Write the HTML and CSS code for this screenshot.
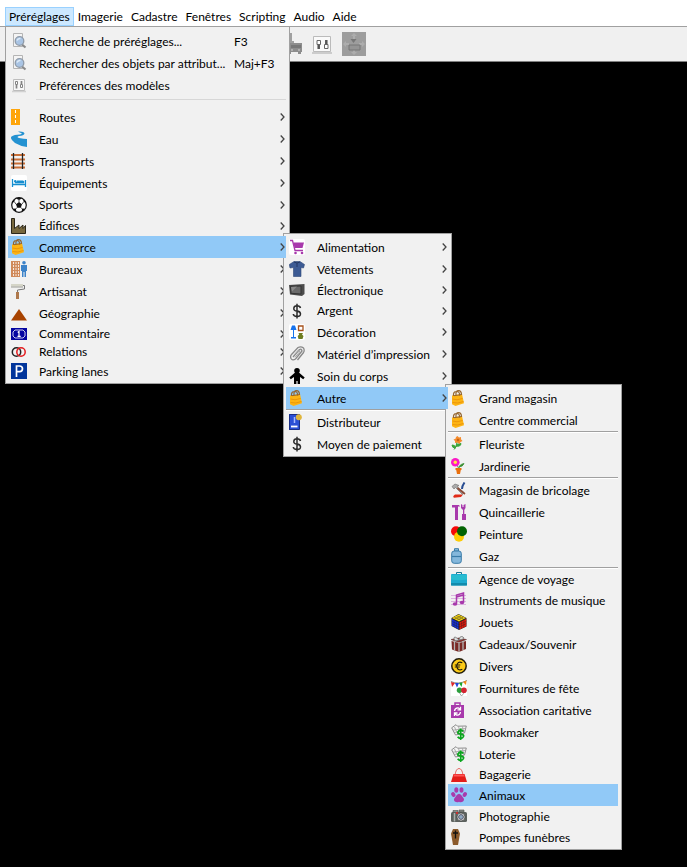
FILE: index.html
```html
<!DOCTYPE html>
<html lang="fr">
<head>
    <meta charset="UTF-8">
    <meta name="viewport" content="width=device-width, initial-scale=1.0">
    <title>Préréglages</title>
    <link rel="stylesheet" href="styles.css">
</head>
<body>
    <!-- shared icons -->
    <svg class="defs" width="0" height="0">
        <symbol id="arrow" viewBox="0 0 5 8">
            <path d="M.7.5 4 4 .7 7.5" fill="none" stroke="#444" stroke-width="1.3"/>
        </symbol>
        <symbol id="search" viewBox="0 0 16 16">
            <path d="M2.500.5h9v13h-9z" fill="#f4f4f4" stroke="#b4b4b4"/>
            <path d="M11 11.500 14.500 14.500" stroke="#8b8b8b" stroke-width="2.200"/>
            <circle cx="8.500" cy="8" r="4.300" fill="#a9c4e4" stroke="#8e9aa8" stroke-width="1.300"/>
            <path d="M6 7.500Q7 5 9.500 5.500" fill="none" stroke="#dfecf8" stroke-width="1.500"/>
        </symbol>
        <symbol id="prefs" viewBox="0 0 16 16">
            <path d="M1 14.500h14" stroke="#999" stroke-width="1.500" opacity=".5"/>
            <path d="M2.500 2.500h11v11h-11z" fill="#fafafa" stroke="#a8a8a8"/>
            <path d="M4.500 4.500h2v3h-2zM9.500 7.500h2v3h-2z" fill="#fff" stroke="#555"/>
            <path d="M5.500 8v3.500M10.500 4v3" stroke="#555" stroke-width="1.700"/>
        </symbol>
        <symbol id="bag" viewBox="0 0 16 16">
            <path d="M1 5.500 11 4l2 9.300L4.500 16 1 14.300z" fill="#fdb414"/>
            <path d="M2.500 6Q2 1.500 5.500 1.500T8.500 5.500M5 5Q4.500.6 7.500.6T10.500 5" fill="none" stroke="#94652f" stroke-width="1.200"/>
            <path d="M3 5.700 10 4.700" stroke="#94652f"/>
            <path d="M1.500 9q4 1.800 10-.5M1.500 12.500q5 1.500 11-1" fill="none" stroke="#e8920a" stroke-width=".9"/>
        </symbol>
        <symbol id="dollar" viewBox="0 0 16 16">
            <path d="M11.500 5Q11 2.800 8 2.800T4.800 5.300 8 8t3.500 2.900T8 13.500 4.300 11M8 .8v14.700" fill="none" stroke="#2b2b2b" stroke-width="1.500"/>
        </symbol>
        <symbol id="ticket" viewBox="0 0 16 16">
            <path d="M.7 3.800 5 .7l1.500 1.500L15.300 2 13.500 9 4.500 11z" fill="#f4f4f4" stroke="#8c8c8c"/>
            <path d="M2 6.200 14 4.500M3 8.500 13.500 6.800M3.500 3 7 10.500M7.500 2.500l2 7M11.500 2.500l1 6" fill="none" stroke="#9a9a9a" stroke-width=".8"/>
            <path d="M12.300 7.500Q11.500 6.200 9.700 6.200T7 8t2.700 2.200T12.500 12.500 9.700 14.300 6.700 12.700M9.700 4.500V16" fill="none" stroke="#0aa51c" stroke-width="1.700"/>
        </symbol>
    </svg>

    <nav class="menubar">
        <button class="open">Préréglages</button>
        <button>Imagerie</button>
        <button>Cadastre</button>
        <button>Fenêtres</button>
        <button>Scripting</button>
        <button>Audio</button>
        <button>Aide</button>

        <ul class="menu main-menu">
            <li><button class="item"><svg class="icon"><use href="#search"/></svg><span>Recherche de préréglages...</span><kbd>F3</kbd></button></li>
            <li><button class="item"><svg class="icon"><use href="#search"/></svg><span>Rechercher des objets par attribut...</span><kbd>Maj+F3</kbd></button></li>
            <li><button class="item"><svg class="icon faded"><use href="#prefs"/></svg><span>Préférences des modèles</span></button></li>
            <li class="divider"></li>
            <li><button class="item"><svg class="icon" viewBox="0 0 16 16"><path d="M0 0h9v16H0z" fill="#fea50b"/><path d="M4.500 1v15" stroke="#fff" stroke-dasharray="3 2"/></svg><span>Routes</span><svg class="arrow"><use href="#arrow"/></svg></button></li>
            <li><button class="item"><svg class="icon" viewBox="0 0 16 16"><path d="M7 .5Q13 0 13.500 2.500 13 4.500 8 5q-3 1 0 2 5 1 8 1v8Q10 15.500 4 12-1.500 8 .5 5.500 3 3.500 9 3.500q3-.8 1-1.500T7 .5z" fill="#2492d1"/></svg><span>Eau</span><svg class="arrow"><use href="#arrow"/></svg></button></li>
            <li><button class="item"><svg class="icon" viewBox="0 0 16 16"><path d="M0 2h14M0 6.500h14M0 10.500h14M0 14.500h14" stroke="#c96f37" stroke-width="1.800"/><path d="M2.500 0v16M11.500 0v16" stroke="#222" stroke-width="1.300"/></svg><span>Transports</span><svg class="arrow"><use href="#arrow"/></svg></button></li>
            <li><button class="item"><svg class="icon" viewBox="0 0 16 16"><rect width="16" height="16" rx="2" fill="#fff"/><path d="M1.500 4v8M14.500 5v7M1 9.500h14M4 7.500h9" fill="none" stroke="#168fd0" stroke-width="1.300"/><circle cx="4.300" cy="6.300" r="1.300" fill="#168fd0"/><path d="M6 5.500h6q1.500.5 1.500 2H6z" fill="#168fd0"/></svg><span>Équipements</span><svg class="arrow"><use href="#arrow"/></svg></button></li>
            <li><button class="item short"><svg class="icon" viewBox="0 0 16 16"><circle cx="8" cy="8" r="7.300" fill="#fff" stroke="#111" stroke-width="1.200"/><path d="M8 5l3 2.200L9.800 10.700H6.200L5 7.200zM5 1.500 8 3l3-1.500L8 .5zM.8 6.500l2.500-1.800L4 2.500 1.500 4zM15.200 6.500l-2.500-1.800L12 2.500 14.500 4zM2 11.800l2.800-.2.700 3.200-2-1zM14 11.800l-2.800-.2-.7 3.200 2-1z" fill="#111"/><path d="M8 3v2M5 7.200 3.300 4.700M11 7.200l1.700-2.500M6.200 10.700l-1.400 1M9.800 10.700l1.400 1" stroke="#111" stroke-width=".7"/></svg><span>Sports</span><svg class="arrow"><use href="#arrow"/></svg></button></li>
            <li><button class="item short"><svg class="icon" viewBox="0 0 16 16"><path d="M.5.5h3v10L8 7v3.500L12 7v3.500L14.500 7.500v8H.5z" fill="#78683d" stroke="#2b2719"/></svg><span>Édifices</span><svg class="arrow"><use href="#arrow"/></svg></button></li>
            <li class="active">
                <button class="item"><svg class="icon"><use href="#bag"/></svg><span>Commerce</span><svg class="arrow"><use href="#arrow"/></svg></button>

                <ul class="menu submenu shop-menu">
                    <li><button class="item"><svg class="icon" viewBox="0 0 16 16"><rect width="16" height="16" rx="2" fill="#fff"/><path d="M4.500 3.500H15L13.500 9H5.500z" fill="#a839ac"/><path d="M1 1.500h2.500L6 11.500h8" fill="none" stroke="#a839ac" stroke-width="1.300"/><circle cx="6.500" cy="14" r="1.300" fill="#a839ac"/><circle cx="13" cy="14" r="1.300" fill="#a839ac"/></svg><span>Alimentation</span><svg class="arrow"><use href="#arrow"/></svg></button></li>
                    <li><button class="item"><svg class="icon" viewBox="0 0 16 16"><path d="M5 .5h6l4.500 3L14.500 7 12 6.500v9H4.500v-9L1 7 .3 3.500z" fill="#3d5b94" stroke="#2e4677" stroke-width=".6"/><path d="M5 1q3 2 6 0M8 2v4" fill="none" stroke="#243965"/></svg><span>Vêtements</span><svg class="arrow"><use href="#arrow"/></svg></button></li>
                    <li><button class="item compact"><svg class="icon" viewBox="0 0 16 16"><path d="M0 3 15.500 2v10L13 14 1 12.500z" fill="#4c4c4c"/><path d="M1.500 4.300 12 4v8L2 11.300z" fill="#6a6a6a" stroke="#333"/><path d="M2 5l6-.5-5 5z" fill="#8a8a8a"/></svg><span>Électronique</span><svg class="arrow"><use href="#arrow"/></svg></button></li>
                    <li><button class="item short"><svg class="icon"><use href="#dollar"/></svg><span>Argent</span><svg class="arrow"><use href="#arrow"/></svg></button></li>
                    <li><button class="item"><svg class="icon" viewBox="0 0 16 16"><rect width="16" height="16" rx="2" fill="#fff"/><path d="M3 1.500h3L7.500 6h-6zM4 6h1v7H4zM2 13h5v1.500H2z" fill="#1673ee"/><path d="M9.500 2h4.500v4.500H9.500z" fill="#fff" stroke="#a6521c" stroke-width="1.300"/><path d="M9.500 9h4.500l-1 1.500 1.500 1.500-1 3h-4L8.700 12l1.500-1.500z" fill="#6e7d20"/></svg><span>Décoration</span><svg class="arrow"><use href="#arrow"/></svg></button></li>
                    <li><button class="item"><svg class="icon" viewBox="0 0 16 16"><path d="M4 11 10.500 3.500q2-1 2.500 1.500L6.500 13q-3 2-4.500-.5-1-2.500.5-4L9 1.500q3-1.500 5.500.5 1.300 2.500 0 4.500L8.500 14" fill="none" stroke="#888" stroke-width="1.300"/><path d="M4.500 9.500 9.500 4q2 0 1 2L6 11.300" fill="none" stroke="#aaa"/></svg><span>Matériel d’impression</span><svg class="arrow"><use href="#arrow"/></svg></button></li>
                    <li><button class="item"><svg class="icon" viewBox="0 0 16 16"><circle cx="8" cy="2.800" r="2.800" fill="#000"/><path d="M5.500 5h5l5.200 4.500-1.500 1.800L11 9v7H8.600v-3H7.400v3H5V9l-3.200 2.300L.3 9.500z" fill="#000"/></svg><span>Soin du corps</span><svg class="arrow"><use href="#arrow"/></svg></button></li>
                    <li class="active">
                        <button class="item"><svg class="icon"><use href="#bag"/></svg><span>Autre</span><svg class="arrow"><use href="#arrow"/></svg></button>

                        <ul class="menu submenu other-menu">
                            <li><button class="item"><svg class="icon"><use href="#bag"/></svg><span>Grand magasin</span></button></li>
                            <li><button class="item"><svg class="icon"><use href="#bag"/></svg><span>Centre commercial</span></button></li>
                            <li class="line"></li>
                            <li><button class="item"><svg class="icon" viewBox="0 0 16 16"><path d="M6 6Q7 10 3 13.500M4.500 12Q1 12 1 9q3-.5 3.500 3zM5.500 10Q6 7.500 10 7.500 9.500 11 5.500 10z" fill="#3ba53b" stroke="#3ba53b"/><path d="M6.500 0l1.500 1.500L10 1v2.200L11.500 5 9.500 6 8.500 8 6.500 6.500 4 7V5L2.500 3.500l2-.8L5 1z" fill="#f58b2c"/><circle cx="7" cy="4" r="1.300" fill="#c66414"/></svg><span>Fleuriste</span></button></li>
                            <li><button class="item"><svg class="icon" viewBox="0 0 16 16"><path d="M6 7l1.500 3M8 10Q8 6.500 13 5.500 12 8.500 8 9" fill="#398e31" stroke="#398e31" stroke-width=".8"/><circle cx="4.300" cy="4.300" r="4.300" fill="#fb19c5"/><circle cx="4.300" cy="4.300" r="1.700" fill="#ffe53d"/><path d="M4.500 10h6v2h-.7l-.8 4H6l-.8-4h-.7z" fill="#e96f0c"/></svg><span>Jardinerie</span></button></li>
                            <li class="line"></li>
                            <li><button class="item"><svg class="icon" viewBox="0 0 16 16"><path d="M4 12.500h8l-2 2.500-7 .7q-2-1 1-3.200z" fill="#e12a17"/><path d="M1 4.500 4 2l4 1.500-2 1 7 6-1.500 2-7-7L3 7z" fill="#aaa" stroke="#777" stroke-width=".7"/><path d="M13.500.5Q11 4 11 7" fill="none" stroke="#284c91" stroke-width="2"/><path d="M6.500 6 14 12" stroke="#8b4b37" stroke-width="1.700"/></svg><span>Magasin de bricolage</span></button></li>
                            <li><button class="item"><svg class="icon" viewBox="0 0 16 16"><path d="M1 1h7l1 1.500H7V16H4V3.500H1zM10 0l1.500 1v2h1V1L14.500 0v4L13.300 6v4H15v6h-4v-6h1V6L10 4z" fill="#a839ac"/></svg><span>Quincaillerie</span></button></li>
                            <li><button class="item"><svg class="icon" viewBox="0 0 16 16"><circle cx="5" cy="5.200" r="5" fill="#f50909"/><circle cx="8" cy="10.800" r="5" fill="#fdcc05"/><circle cx="11" cy="5.200" r="5" fill="#026302"/></svg><span>Peinture</span></button></li>
                            <li><button class="item"><svg class="icon" viewBox="0 0 16 16"><path d="M3.500.7h4v2.500h-4z" fill="#8fc0de" stroke="#397ba8"/><rect x=".7" y="3" width="9.600" height="12.300" rx="2.500" fill="#84b7db" stroke="#397ba8"/><path d="M1 8.500h9" stroke="#397ba8" stroke-width="1.200"/></svg><span>Gaz</span></button></li>
                            <li class="line"></li>
                            <li><button class="item compact"><svg class="icon" viewBox="0 0 16 16"><path d="M5.500 3.500v-2h5v2" fill="none" stroke="#18778f"/><rect y="3" width="16" height="11.500" rx="1" fill="#1eabd0"/><path d="M0 4h16v4.500Q8 10 0 8.500z" fill="#28bcd0"/><path d="M0 12h16v2.500H0z" fill="#128bac"/></svg><span>Agence de voyage</span></button></li>
                            <li><button class="item"><svg class="icon" viewBox="0 0 16 16"><path d="M0 3.500h15M0 6.500h15M0 9.500h15M0 12.500h15" stroke="#d4a4db" stroke-width=".8"/><path d="M5.500 11.500V3l7-2v9M5.500 5l7-2" fill="none" stroke="#a839ac" stroke-width="1.500"/><ellipse cx="4" cy="12" rx="2.300" ry="1.700" fill="#a839ac"/><ellipse cx="11" cy="10.500" rx="2.300" ry="1.700" fill="#a839ac"/></svg><span>Instruments de musique</span></button></li>
                            <li><button class="item"><svg class="icon" viewBox="0 0 16 16"><path d="M7.500 0 15.500 4v8.500L8 16 .5 12V4z" fill="#222"/><path d="M7.500.5 14.800 4 8 7.400 1 4z" fill="#f7d719"/><path d="M.9 5l6.600 3.200v7L.9 11.700z" fill="#1832e0"/><path d="M8.500 8.200 15.200 5v7.200l-6.700 3.200z" fill="#e8180c"/><path d="M5.500 1.700l7 3.300M3.200 3l7 3.300M10.200 1.900l-7 3.300M12.500 3 5.500 6.400M3.100 6v7M5.300 7v7.300M.9 7.400l7.100 3.400 7.200-3.400M.9 9.700 8 13.100l7.200-3.400M10.700 7v7.300M12.900 6v7" fill="none" stroke="#222" stroke-width=".4"/></svg><span>Jouets</span></button></li>
                            <li><button class="item"><svg class="icon" viewBox="0 0 16 16"><path d="M.5 5 8 7l7-2v8l-7 3-7-2.500z" fill="#7a2925"/><path d="M0 3.500 7.500 2l8 1.500L8 6.500z" fill="#8c302b" stroke="#553030" stroke-width=".5"/><path d="M3.500 5v9.500M12 5v9M8 6v10" stroke="#b5b5b5" stroke-width="1.300"/><path d="M8 4Q3-1 3 2.500T8 4q1-5 4-3T8 4" fill="#ddd" stroke="#777" stroke-width=".9"/></svg><span>Cadeaux/Souvenir</span></button></li>
                            <li><button class="item"><svg class="icon" viewBox="0 0 16 16"><circle cx="8" cy="8" r="7.200" fill="#fccb17" stroke="#211c0b" stroke-width="1.500"/><path d="M11.300 4.700Q6.500 2.500 5.700 8 6.500 13.500 11.300 11.300M3.800 7h5.500M3.800 9h5" fill="none" stroke="#211c0b" stroke-width="1.200"/></svg><span>Divers</span></button></li>
                            <li><button class="item"><svg class="icon" viewBox="0 0 16 16"><rect width="16" height="16" fill="#fff"/><path d="M0 1.500Q7 5 16 .5" fill="none" stroke="#555" stroke-width=".7"/><path d="M0 2l4 1L1 7z" fill="#df2727"/><path d="M4 3h4L6 7.500z" fill="#2249dd"/><path d="M8 3l3.500-.5L10.500 7z" fill="#17a92c"/><path d="M12 2l3.500-1.500L15 5z" fill="#f18b16"/><circle cx="8.500" cy="10.300" r="2.700" fill="#2b9e3c"/><circle cx="13" cy="10.300" r="2.800" fill="#d42331"/><path d="M8.500 13l2 3 2.500-3" fill="none" stroke="#888" stroke-width=".7"/></svg><span>Fournitures de fête</span></button></li>
                            <li><button class="item"><svg class="icon" viewBox="0 0 16 16"><path d="M4 4V1h5v3" fill="none" stroke="#a839ac" stroke-width="1.500"/><path d="M0 3h13v13H0z" fill="#a839ac"/><path d="M3.500 9Q4 5.500 7.500 6l1.500 1M9.500 10Q9 13.500 5.500 13L4 12M9.500 4.800v3h-3M3.500 14v-3h3" fill="none" stroke="#fff" stroke-width="1.300"/></svg><span>Association caritative</span></button></li>
                            <li><button class="item"><svg class="icon"><use href="#ticket"/></svg><span>Bookmaker</span></button></li>
                            <li><button class="item"><svg class="icon"><use href="#ticket"/></svg><span>Loterie</span></button></li>
                            <li><button class="item small"><svg class="icon" viewBox="0 0 16 16"><path d="M4 8Q5 1.500 8 1.500T12 8" fill="none" stroke="#e46a66"/><path d="M2.500 7h11L16 15H0z" fill="#e31d19"/><path d="M3 7.500h10l.7 2H2.500z" fill="#f55"/></svg><span>Bagagerie</span></button></li>
                            <li><button class="item selected"><svg class="icon" viewBox="0 0 16 16"><g fill="#a839ac"><ellipse cx="2.300" cy="7.500" rx="2" ry="2.600" transform="rotate(-25 2.300 7.500)"/><ellipse cx="5.300" cy="3" rx="2" ry="2.800"/><ellipse cx="10.500" cy="3" rx="2" ry="2.800"/><ellipse cx="13.800" cy="7.500" rx="2" ry="2.600" transform="rotate(25 13.800 7.500)"/><path d="M8 6.700Q10 7 12 10.500q2 2 0 4-2 1.500-4 .3-2 1.200-4.200-.3-1.800-2 .2-4Q6 7 8 6.700z"/></g></svg><span>Animaux</span></button></li>
                            <li><button class="item compact"><svg class="icon" viewBox="0 0 16 16"><rect y="4" width="16" height="10" rx="1.500" fill="#5c615e"/><path d="M2 2.500h5v2H2zM8 2h5v2H8z" fill="#888c89" stroke="#4b4f4c" stroke-width=".6"/><path d="M3.500 5v8.500" stroke="#aab0ac" stroke-width="1.500"/><circle cx="10" cy="9" r="4" fill="#eee" stroke="#3d403e" stroke-width=".7"/><circle cx="10" cy="9" r="2.400" fill="#8fa9c3" stroke="#556"/><circle cx="6" cy="5" r="1" fill="#e22"/></svg><span>Photographie</span></button></li>
                            <li><button class="item"><svg class="icon" viewBox="0 0 16 16"><path d="M2 0h5l2 4.500L7 16H2L0 4.500z" fill="#8b5a2b"/><path d="M4.500 1.500v8M2 4h5" stroke="#111" stroke-width="1.300"/></svg><span>Pompes funèbres</span></button></li>
                        </ul>
                    </li>
                    <li class="line"></li>
                    <li><button class="item"><svg class="icon" viewBox="0 0 16 16"><path d="M0 0h10.500v16H0z" fill="#2b4fd5"/><path d="M.5.5h10v15H.5z" fill="none" stroke="#1a2f87"/><path d="M2 12.500h6.500" stroke="#fff" stroke-width="1.800"/><path d="M5.500 3v6" stroke="#a9bbff" stroke-width="1.500"/><circle cx="9.800" cy="3.300" r="3" fill="#dfb53b"/></svg><span>Distributeur</span></button></li>
                    <li><button class="item"><svg class="icon"><use href="#dollar"/></svg><span>Moyen de paiement</span></button></li>
                </ul>
            </li>
            <li><button class="item"><svg class="icon" viewBox="0 0 16 16"><path d="M0 0h9v16H0z" fill="#d08a5b"/><path d="M2.500 1v14M5 1v14M7.500 1v14" stroke="#fff" stroke-width=".8" stroke-dasharray="2 1"/><circle cx="13" cy="1.800" r="1.800" fill="#3d83c9"/><path d="M10 4h6v6h-1v6h-1.500v-5h-1v5H11v-6h-1z" fill="#3d83c9"/></svg><span>Bureaux</span><svg class="arrow"><use href="#arrow"/></svg></button></li>
            <li><button class="item"><svg class="icon" viewBox="0 0 16 16"><path d="M0 1h12v3.500H0z" fill="#d5d5c8"/><path d="M0 4h12" stroke="#aaa"/><path d="M12 2.500h1.500V6L6.500 7v3" fill="none" stroke="#777"/><path d="M5 9h3v7H5z" fill="#ae784c"/></svg><span>Artisanat</span><svg class="arrow"><use href="#arrow"/></svg></button></li>
            <li><button class="item"><svg class="icon" viewBox="0 0 16 16"><path d="M8 4l8 11.500H0z" fill="#a84300"/></svg><span>Géographie</span><svg class="arrow"><use href="#arrow"/></svg></button></li>
            <li><button class="item small"><svg class="icon" viewBox="0 0 16 16"><path d="M0 2h16v12H0z" fill="#0404a0"/><path d="M4 4h8l2 2v4l-2 2H4l-2-2V6z" fill="none" stroke="#fff" stroke-width=".8"/><path d="M6.700 6.500 8 5.500V10M6.500 10.300h3.200" fill="none" stroke="#fff" stroke-width="1.200"/></svg><span>Commentaire</span><svg class="arrow"><use href="#arrow"/></svg></button></li>
            <li><button class="item tight"><svg class="icon" viewBox="0 0 16 16"><circle cx="5.500" cy="8" r="4.200" fill="none" stroke="#222" stroke-width="1.500"/><circle cx="10" cy="8" r="4.200" fill="none" stroke="#e31a1c" stroke-width="1.500"/></svg><span>Relations</span><svg class="arrow"><use href="#arrow"/></svg></button></li>
            <li><button class="item"><svg class="icon" viewBox="0 0 16 16"><path d="M0 0h16v16H0z" fill="#01359b"/><path d="M5.500 14V3H8.500Q11.500 3 11.500 5.800T8.500 8.700H6" fill="none" stroke="#fff" stroke-width="1.700"/></svg><span>Parking lanes</span><svg class="arrow"><use href="#arrow"/></svg></button></li>
        </ul>
    </nav>

    <div class="toolbar">
        <button aria-label="Transport"><svg width="24" height="24" viewBox="0 0 24 24"><path d="M8 1h6v8h2v3H8z" fill="#a0a0a0"/><path d="M10 11h14v9h-1v2h-3v-2h-7v2h-3z" fill="#8d8d8d"/><path d="M13 13h10v3H13z" fill="#777"/><path d="M13 18h2M20 18h2" stroke="#bbb" stroke-width="1.500"/></svg></button>
        <button aria-label="Préférences"><svg width="24" height="24" viewBox="0 0 24 24"><path d="M2 21h20" stroke="#aaa" stroke-width="2" opacity=".5"/><path d="M3.500 4.500h17v15h-17z" fill="#fafafa" stroke="#bbb"/><path d="M7 8.500h3.500v4H7zM14.500 12.500H18v4h-3.500z" fill="#fff" stroke="#666"/><path d="M8.700 13v4M16.300 8v4" stroke="#555" stroke-width="2.500"/></svg></button>
        <button aria-label="Déplacer"><svg width="24" height="24" viewBox="0 0 24 24"><path d="M0 0h24v24H0z" fill="#9d9d9d"/><path d="M12 1l3 3h-2v4h-2V4H9zM12 23l3-3h-2v-3h-2v3H9zM1 12l3-3v2h3v2H4v2zM23 12l-3-3v2h-3v2h3v2z" fill="#adadad"/><path d="M7 13h11v5H7z" fill="#949494" stroke="#777"/><path d="M8.500 7h6l-3 4z" fill="#777"/></svg></button>
    </div>

    <main class="map"></main>
</body>
</html>
```
FILE: styles.css
```css
body {
    margin: 0;
    min-height: 100vh;
    display: flex;
    flex-direction: column;
    background-color: #000;
    color: #000;
    font-family: Lato, "Open Sans", sans-serif;
    font-size: 12px;
}

button {
    margin: 0;
    padding: 0;
    border: none;
    background: none;
    color: inherit;
    font: inherit;
    text-align: left;
    white-space: nowrap;
}

.defs {
    position: absolute;
}

/* menu bar */
.menubar {
    position: relative;
    z-index: 10;
    display: flex;
    padding: 7px 5px 0;
    background-color: #fff;
    border-bottom: 1px solid #a0a0a0;
}

.menubar > button {
    height: 19px;
    padding: 0 3px;
    border: 1px solid transparent;
    line-height: 17px;
}

.menubar > .open {
    background-color: #cce8ff;
    border-color: #99d1ff;
}

/* toolbar */
.toolbar {
    display: flex;
    gap: 8px;
    height: 34px;
    padding-left: 278px;
    align-items: center;
    background-color: #f0f0f0;
    border-bottom: 1px solid #808080;
}

.toolbar svg {
    display: block;
}

.map {
    flex: 1;
}

/* drop-down menus */
.menu {
    position: absolute;
    box-sizing: border-box;
    margin: 0;
    padding: 2px 3px 1px 2px;
    list-style: none;
    background-color: #f1f1f1;
    border: 1px solid #a0a0a0;
}

.main-menu {
    top: 26px;
    left: 5px;
    min-width: 285px;
    padding-top: 3px;
}

.submenu {
    top: -3px;
    left: calc(100% - 3px);
    z-index: 1;
}

.shop-menu {
    min-width: 169px;
}

.other-menu {
    min-width: 177px;
}

.item {
    display: flex;
    align-items: center;
    width: 100%;
    height: 22px;
    padding: 0 1px 0 3px;
}

.item.short {
    height: 21px;
}

.item.compact {
    height: 20px;
}

.item.small {
    height: 19px;
}

.item.tight {
    height: 17px;
}

.item.selected {
    background-color: #91c9f7;
}

.active {
    position: relative;
    z-index: 1;
}

/* the open entry stays above its own submenu */
.active > .item {
    position: relative;
    z-index: 2;
    background-color: #91c9f7;
}

.item span {
    flex: 1;
}

.item kbd {
    width: 51px;
    font: inherit;
}

.icon {
    flex: none;
    width: 16px;
    height: 16px;
    margin-right: 12px;
}

.faded {
    opacity: 0.7;
}

.arrow {
    width: 5px;
    height: 8px;
}

.divider {
    height: 1px;
    margin: 3px 0 6px 28px;
    background-color: #d7d7d7;
}

.line {
    height: 1px;
    background-color: #a0a0a0;
    border-bottom: 1px solid #fff;
}
```
